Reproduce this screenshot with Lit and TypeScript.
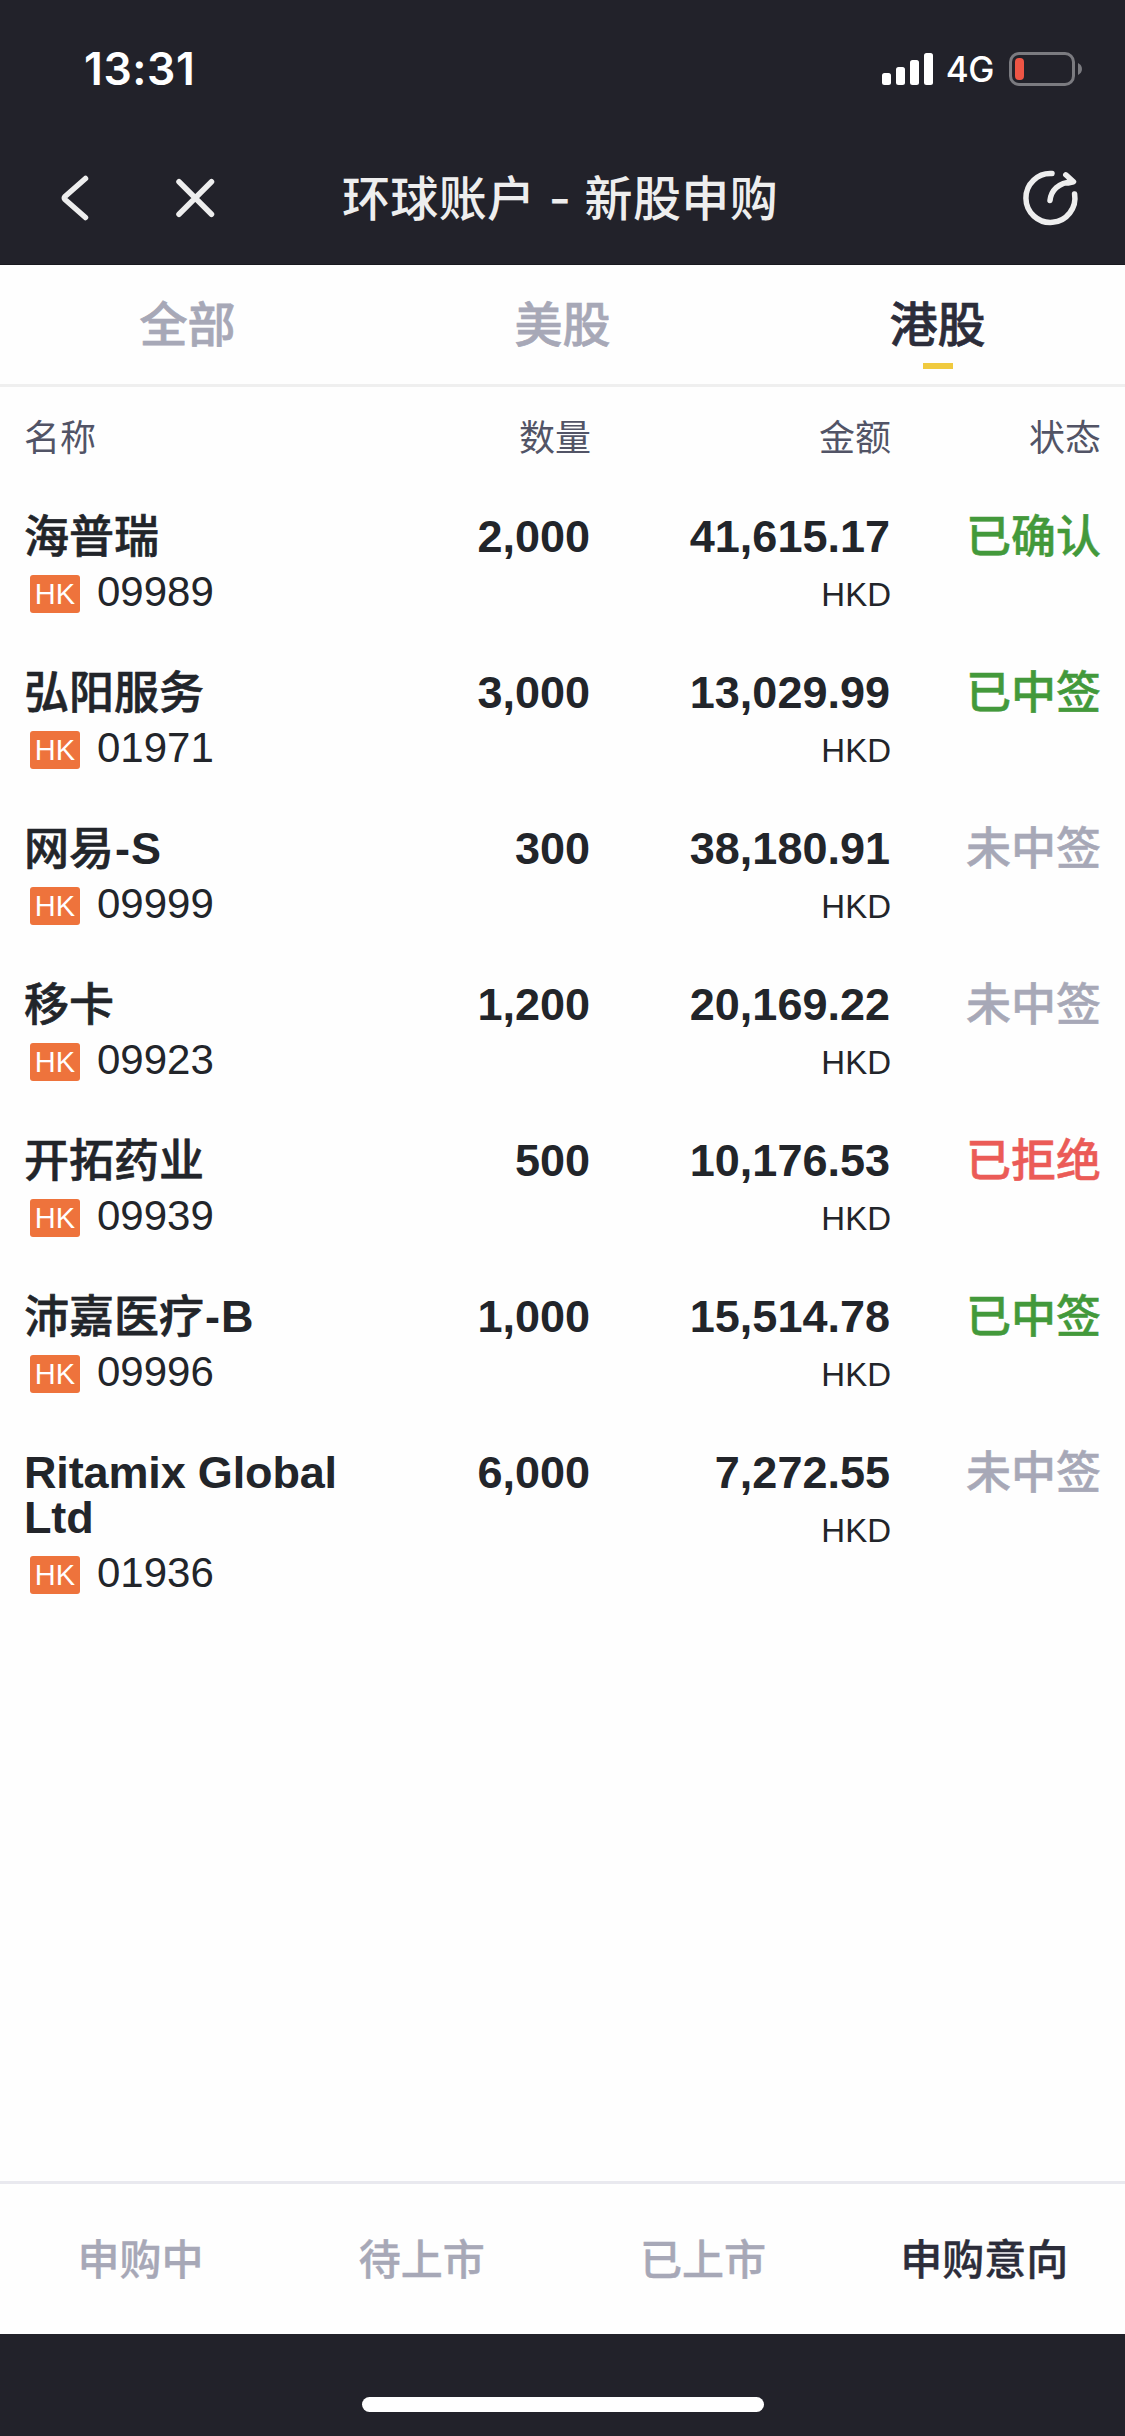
import { LitElement, html, css } from "lit";
import { customElement, state } from "lit/decorators.js";
import { classMap } from "lit/directives/class-map.js";

type Tone = "good" | "muted" | "bad";

interface Order {
  name: string;
  suffix?: string;
  code: string;
  quantity: string;
  amount: string;
  status: string;
  tone: Tone;
}

const ORDERS: Order[] = [
  { name: "海普瑞", code: "09989", quantity: "2,000", amount: "41,615.17", status: "已确认", tone: "good" },
  { name: "弘阳服务", code: "01971", quantity: "3,000", amount: "13,029.99", status: "已中签", tone: "good" },
  { name: "网易", suffix: "-S", code: "09999", quantity: "300", amount: "38,180.91", status: "未中签", tone: "muted" },
  { name: "移卡", code: "09923", quantity: "1,200", amount: "20,169.22", status: "未中签", tone: "muted" },
  { name: "开拓药业", code: "09939", quantity: "500", amount: "10,176.53", status: "已拒绝", tone: "bad" },
  { name: "沛嘉医疗", suffix: "-B", code: "09996", quantity: "1,000", amount: "15,514.78", status: "已中签", tone: "good" },
  { name: "Ritamix Global Ltd", code: "01936", quantity: "6,000", amount: "7,272.55", status: "未中签", tone: "muted" },
];

const isLatin = (text: string) => /^[\x20-\x7e]+$/.test(text);

@customElement("status-bar")
export class StatusBar extends LitElement {
  static styles = css`
    :host {
      display: flex;
      justify-content: space-between;
      height: 132px;
      padding: 0 43px 0 84px;
      box-sizing: border-box;
      color: #fff;
      font-family: Inter, "Liberation Sans", sans-serif;
    }
    .time {
      margin-top: 42px;
      font-size: 44.5px;
      line-height: 54px;
      font-weight: 600;
      letter-spacing: 0.6px;
    }
    .right {
      display: flex;
      align-items: flex-start;
    }
    .signal {
      margin-top: 53px;
    }
    .network {
      margin: 48px 15px 0 12px;
      font-size: 35px;
      line-height: 42px;
      font-weight: 500;
      letter-spacing: -0.5px;
    }
    .battery {
      margin-top: 52px;
    }
    svg {
      display: block;
    }
  `;

  render() {
    return html`
      <div class="time">13:31</div>
      <div class="right">
        <svg class="signal" width="52" height="32" viewBox="0 0 52 32" fill="#fff">
          <rect x="0" y="20" width="9" height="12" rx="2.5" />
          <rect x="14" y="14" width="9" height="18" rx="2.5" />
          <rect x="28" y="7" width="9" height="25" rx="2.5" />
          <rect x="42" y="0" width="9" height="32" rx="2.5" />
        </svg>
        <div class="network">4G</div>
        <svg class="battery" width="73" height="34" viewBox="0 0 73 34">
          <rect x="1.5" y="1.5" width="63" height="31" rx="8.5" fill="none" stroke="#7b7b80" stroke-width="3" />
          <rect x="6" y="6" width="9" height="22" rx="4" fill="#ee5545" />
          <path d="M69 11c5.300 2.500 5.300 9.500 0 12z" fill="#7b7b80" />
        </svg>
      </div>
    `;
  }
}

@customElement("nav-header")
export class NavHeader extends LitElement {
  static styles = css`
    :host {
      display: grid;
      grid-template-columns: 264px 1fr 264px;
      align-items: center;
      height: 133px;
      box-sizing: border-box;
      border-bottom: 1px solid #19191f;
      color: #eee;
    }
    .left {
      display: flex;
      padding-left: 53px;
      gap: 81px;
    }
    .right {
      display: flex;
      justify-content: flex-end;
      padding-right: 45px;
    }
    .title {
      padding: 2px 5px 0 0;
      text-align: center;
      white-space: nowrap;
      font: 500 48px/64px Inter, "Noto Sans CJK SC", sans-serif;
      letter-spacing: 0.4px;
    }
    svg {
      display: block;
      fill: none;
      stroke: #eee;
      stroke-width: 5.5;
      stroke-linecap: round;
      stroke-linejoin: round;
    }
  `;

  render() {
    return html`
      <div class="left">
        <svg width="40" height="60" viewBox="0 0 40 60">
          <path d="M32.500 10.500 12 28.500Q10.500 30 12 31.500L32.500 49.500" />
        </svg>
        <svg width="42" height="60" viewBox="0 0 42 60">
          <path d="M5 13.700 37.500 46.300M37.500 13.700 5 46.300" />
        </svg>
      </div>
      <div class="title">环球账户 - 新股申购</div>
      <div class="right">
        <svg width="60" height="60" viewBox="0 0 60 60">
          <path d="M32 5.500A24.500 24.500 0 1 0 54.600 26" />
          <path d="M30 32.500C31 23 38 14.500 52.500 13.700M45.800 6.800 53.500 13.700 48 15" />
        </svg>
      </div>
    `;
  }
}

@customElement("order-row")
export class OrderRow extends LitElement {
  static properties = { order: { attribute: false } };
  declare order: Order;

  static styles = css`
    :host {
      display: grid;
      grid-template-columns: 345px 222px 300px 210px;
      padding-bottom: 56px;
      color: #22252a;
      font-family: "Liberation Sans", "Noto Sans CJK SC", sans-serif;
    }
    .name,
    .number {
      font-size: 45px;
      line-height: 45px;
      font-weight: 700;
    }
    .name {
      letter-spacing: -0.15px;
    }
    .number {
      padding-right: 1px;
    }
    .cjk {
      font-weight: 500;
      line-height: 0;
      letter-spacing: 0;
      vertical-align: -1px;
      -webkit-text-stroke: 0.6px currentColor;
    }
    .suffix {
      padding-left: 1px;
      letter-spacing: 1px;
    }
    .cell {
      text-align: right;
    }
    .stock {
      display: flex;
      align-items: center;
      height: 38px;
      margin-top: 16px;
      padding-left: 6px;
      gap: 17px;
    }
    .market {
      width: 50px;
      height: 38px;
      border-radius: 3px;
      background: #ee733c;
      color: #fff;
      font-size: 29px;
      line-height: 38px;
      text-align: center;
    }
    .code {
      font-size: 42px;
      line-height: 38px;
      margin-top: -5px;
    }
    .currency {
      margin-top: 17px;
      font-size: 33px;
      line-height: 38px;
    }
    .status {
      padding-top: 1px;
      font-size: 45px;
      line-height: 45px;
      font-weight: 500;
      -webkit-text-stroke: 0.5px currentColor;
    }
    .good {
      color: #43993b;
    }
    .muted {
      color: #a7a8b7;
    }
    .bad {
      color: #eb5b57;
    }
  `;

  render() {
    const o = this.order;
    return html`
      <div>
        <div class="name"><span class=${classMap({ cjk: !isLatin(o.name) })}>${o.name}</span>${o.suffix
          ? html`<span class="suffix">${o.suffix}</span>`
          : ""}</div>
        <div class="stock">
          <span class="market">HK</span>
          <span class="code">${o.code}</span>
        </div>
      </div>
      <div class="cell number">${o.quantity}</div>
      <div class="cell">
        <div class="number">${o.amount}</div>
        <div class="currency">HKD</div>
      </div>
      <div class=${classMap({ cell: true, status: true, [o.tone]: true })}>${o.status}</div>
    `;
  }
}

@customElement("app-root")
export class AppRoot extends LitElement {
  @state() private market = "港股";
  @state() private section = "申购意向";

  static styles = css`
    :host {
      display: flex;
      flex-direction: column;
      width: 1125px;
      height: 2436px;
      background: #fefefe;
      font-family: "Liberation Sans", "Noto Sans CJK SC", sans-serif;
    }
    .top {
      background: #22222a;
    }
    .markets {
      display: grid;
      grid-template-columns: repeat(3, 1fr);
      height: 122px;
      box-sizing: border-box;
      border-bottom: 3px solid #efefef;
      background: #fefefe;
    }
    .market {
      display: flex;
      flex-direction: column;
      align-items: center;
      padding-top: 29px;
      color: #a7a8b7;
      font-size: 48px;
      line-height: 64px;
      font-weight: 500;
      -webkit-text-stroke: 0.7px currentColor;
    }
    .active {
      color: #2c2d3a;
    }
    .market.active::after {
      content: "";
      width: 30px;
      height: 6px;
      margin-top: 5px;
      background: #f0ca3f;
    }
    .columns {
      display: grid;
      grid-template-columns: 345px 222px 300px 210px;
      padding: 28px 24px 0;
      color: #525466;
      font-size: 36px;
      line-height: 48px;
    }
    .end {
      text-align: right;
    }
    .list {
      flex: 1;
      padding: 51px 24px 0;
    }
    .sections {
      display: grid;
      grid-template-columns: repeat(4, 1fr);
      align-items: center;
      height: 153px;
      box-sizing: border-box;
      border-top: 3px solid #e9e9ef;
      background: #fefefe;
    }
    .section {
      padding-top: 3px;
      text-align: center;
      color: #a7a8b7;
      font-size: 42px;
      line-height: 60px;
      font-weight: 500;
      -webkit-text-stroke: 0.4px currentColor;
    }
    .section.active {
      color: #2c2d3a;
    }
    .home {
      display: flex;
      justify-content: center;
      align-items: flex-end;
      height: 102px;
      box-sizing: border-box;
      padding-bottom: 24px;
      background: #22222a;
    }
    .indicator {
      width: 402px;
      height: 15px;
      border-radius: 8px;
      background: #fff;
    }
  `;

  render() {
    return html`
      <div class="top">
        <status-bar></status-bar>
        <nav-header></nav-header>
      </div>
      <div class="markets">
        ${["全部", "美股", "港股"].map(
          (m) => html`<div class=${classMap({ market: true, active: m === this.market })} @click=${() => (this.market = m)}>${m}</div>`
        )}
      </div>
      <div class="columns">
        <div>名称</div>
        <div class="end">数量</div>
        <div class="end">金额</div>
        <div class="end">状态</div>
      </div>
      <div class="list">${ORDERS.map((o) => html`<order-row .order=${o}></order-row>`)}</div>
      <div class="sections">
        ${["申购中", "待上市", "已上市", "申购意向"].map(
          (s) => html`<div class=${classMap({ section: true, active: s === this.section })} @click=${() => (this.section = s)}>${s}</div>`
        )}
      </div>
      <div class="home"><div class="indicator"></div></div>
    `;
  }
}
